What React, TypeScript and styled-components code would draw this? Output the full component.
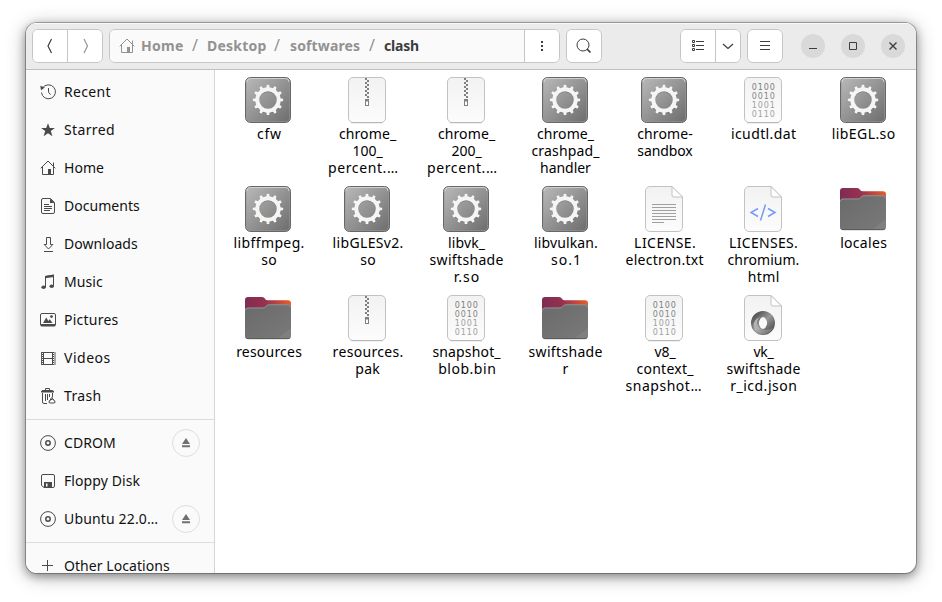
import React, { useLayoutEffect, useRef, useState } from "react";
import styled, { createGlobalStyle, css } from "styled-components";

const GlobalStyle = createGlobalStyle`
  * { box-sizing: border-box; }
  body { margin: 0; background: #fff; overflow: hidden; }
  svg { display: block; flex: none; }
`;

const fontStack = `"Noto Sans", "Open Sans", sans-serif`;

const Desktop = styled.div`
  width: 942px;
  height: 602px;
  padding: 23px 26px 29px;
  background: #fff;
  font: 14px/17px ${fontStack};
  color: #000;
`;

const Window = styled.main`
  width: 890px;
  height: 550px;
  display: flex;
  flex-direction: column;
  border-radius: 11px;
  overflow: hidden;
  background: #fff;
  box-shadow: 0 0 0 1px rgba(0, 0, 0, 0.28), 0 3px 9px 1px rgba(0, 0, 0, 0.3),
    0 3px 20px rgba(0, 0, 0, 0.3);
`;

const HeaderBar = styled.header`
  height: 47px;
  flex: none;
  display: flex;
  align-items: flex-start;
  padding: 5px 11px 0 6px;
  background: #ebebeb;
  border-bottom: 1px solid #bfbfbf;
  box-shadow: inset 0 1px #f9f9f9;
`;

const ButtonGroup = styled.div<{ $gap?: number }>`
  display: flex;
  margin-top: 1px;
  height: 34px;
  margin-right: ${(p) => p.$gap ?? 6}px;
  border: 1px solid #c6c6c6;
  border-radius: 6px;
  overflow: hidden;
  background: #fff;
`;

const HeaderButton = styled.button<{ $width: number; $divided?: boolean }>`
  width: ${(p) => p.$width}px;
  padding: 0;
  border: 0;
  ${(p) => p.$divided && css`border-left: 1px solid #c6c6c6;`}
  background: #fff;
  color: #3d3d3d;
  display: flex;
  align-items: center;
  justify-content: center;
`;

const PathBar = styled.nav`
  width: 414px;
  display: flex;
  align-items: center;
  padding-left: 9px;
  background: #fafafa;
  color: #929292;
  font-weight: 700;
`;

const CrumbIcon = styled.span`
  width: 22px;
`;

const Crumb = styled.span<{ $width: number; $current?: boolean }>`
  width: ${(p) => p.$width}px;
  padding-bottom: 2px;
  color: ${(p) => (p.$current ? "#3d3d3d" : "#929292")};
`;

const Slash = styled.span<{ $width: number }>`
  width: ${(p) => p.$width}px;
  padding-bottom: 1px;
  font-weight: 400;
  font-size: 16px;
`;

const Spacer = styled.div`
  flex: 1;
`;

const WindowControls = styled.div`
  display: flex;
  gap: 16px;
  margin-top: 6px;
`;

const ControlButton = styled.button`
  width: 24px;
  height: 24px;
  padding: 0;
  border: 0;
  border-radius: 50%;
  background: #d9d9d9;
  color: #3d3d3d;
  display: flex;
  align-items: center;
  justify-content: center;
`;

const Body = styled.div`
  flex: 1;
  min-height: 0;
  display: flex;
`;

const Sidebar = styled.aside`
  width: 189px;
  flex: none;
  padding-top: 3px;
  background: #fafafa;
  border-right: 1px solid #d5d5d5;
  overflow: hidden;
`;

const Place = styled.div`
  height: 38px;
  display: flex;
  align-items: center;
  gap: 8px;
  padding: 0 14px;
  color: #4a4a4a;
`;

const PlaceName = styled.span`
  flex: 1;
  padding-bottom: 2px;
  color: #111;
`;

const Divider = styled.div`
  height: 1px;
  margin: 4px 0;
  background: #dcdcdc;
`;

const EjectButton = styled.button`
  width: 28px;
  height: 28px;
  padding: 0;
  border: 1px solid #dedede;
  border-radius: 50%;
  background: transparent;
  color: #707070;
  display: flex;
  align-items: center;
  justify-content: center;
`;

const FileGrid = styled.section`
  flex: 1;
  display: grid;
  grid-template-columns: repeat(6, 98px) 100px;
  grid-auto-rows: 109px;
  column-gap: 1px;
  align-content: start;
  padding: 6px 0 0 4px;
`;

const FileCell = styled.figure`
  margin: 0;
  display: flex;
  flex-direction: column;
  align-items: center;
`;

const FileName = styled.figcaption`
  display: flex;
  flex-direction: column;
  align-items: center;
  padding: 1px 0 0 1px;
`;

const NameLine = styled.span<{ $shift?: number }>`
  height: 17px;
  margin-left: ${(p) => (p.$shift ?? 0) * 2}px;
`;

const Tracked = styled.span`
  white-space: pre;
`;

/* Tracks the text so that it fills the width set for it. */
function FitText({ text, width }: { text: string; width: number }) {
  const ref = useRef<HTMLSpanElement>(null);
  const [spacing, setSpacing] = useState(0);
  useLayoutEffect(() => {
    const ctx = document.createElement("canvas").getContext("2d");
    if (!ctx || !ref.current || text.length < 2) return;
    const s = getComputedStyle(ref.current);
    ctx.font = `${s.fontWeight} ${s.fontSize} ${s.fontFamily}`;
    const m = ctx.measureText(text);
    const natural = m.actualBoundingBoxRight + m.actualBoundingBoxLeft;
    setSpacing((width - natural) / (text.length - 1));
  }, [text, width]);
  return (
    <Tracked ref={ref} style={{ letterSpacing: `${spacing}px`, marginRight: `${-spacing}px` }}>
      {text}
    </Tracked>
  );
}

/* ---------- symbolic icons ---------- */

const Symbolic = styled.svg.attrs({ width: 16, height: 16, viewBox: "0 0 16 16" })`
  fill: none;
  stroke: currentColor;
  stroke-width: 1;
`;

const HomeIcon = () => (
  <Symbolic>
    <path d="M.7 8.3 8 1l7.3 7.3M2.500 7v7.500h11V7M13.500 2.500v4" />
    <path d="M8 9h3v5.500H8z" fill="currentColor" stroke="none" />
  </Symbolic>
);

const placeIcons: Record<string, React.ReactNode> = {
  recent: (
    <Symbolic>
      <path d="M2.6 4A7 7 0 1 1 1.500 8.500M8.500 4v4.200l2 2.500" />
      <path d="M.3 1.800 1 6.300 4.800 3.600z" fill="currentColor" stroke="none" />
    </Symbolic>
  ),
  starred: (
    <Symbolic>
      <path d="M8 1.2 9.8 6h5.1l-4.1 3.1 1.6 5.1L8 11.2l-4.4 3 1.6-5.1L1.1 6h5.1z" fill="currentColor" stroke="none" />
    </Symbolic>
  ),
  home: <HomeIcon />,
  documents: (
    <Symbolic>
      <path d="M3 .5h7.500l4 4V14a1.500 1.500 0 0 1-1.500 1.500H3A1.500 1.500 0 0 1 1.500 14V2A1.500 1.500 0 0 1 3 .5z" />
      <path d="M10 .5v4.500h4.500z" fill="currentColor" stroke="none" />
      <path d="M4 6.500h5M4 8.500h8M4 10.500h8M4 12.500h6" />
    </Symbolic>
  ),
  downloads: (
    <Symbolic>
      <path d="M6.500 1.500h4v7h2.300L8.500 13 4.200 8.500h2.300zM4 15.500h9" />
    </Symbolic>
  ),
  music: (
    <Symbolic>
      <path d="M5.500 13V2.500l8-1.300V12" />
      <path d="M5 1.900 14 .5v2.400L5 4.300z" fill="currentColor" stroke="none" />
      <ellipse cx="3.600" cy="13.200" rx="2.200" ry="1.800" fill="currentColor" stroke="none" />
      <ellipse cx="11.700" cy="12.200" rx="2.200" ry="1.800" fill="currentColor" stroke="none" />
    </Symbolic>
  ),
  pictures: (
    <Symbolic>
      <rect x=".5" y="1.500" width="15" height="12" rx="1.500" />
      <path d="M.5 12h15v1a1.300 1.300 0 0 1-1.300 1.500H1.800A1.300 1.300 0 0 1 .5 13z" fill="currentColor" stroke="none" />
      <path d="M3 11 6.300 5.600 8.300 9l1.500-1.800L12.500 11z" fill="currentColor" stroke="none" />
      <circle cx="11.500" cy="4.600" r="1.400" fill="currentColor" stroke="none" />
    </Symbolic>
  ),
  videos: (
    <Symbolic>
      <path d="M3.500 2v13M12.500 2v13M3.500 2.500h9M3.500 8.500h9M3.500 14.500h9" />
      <path d="M2.500 2v13M13.500 2v13" strokeDasharray="1 1" />
      <path d="M1.500 2v13M15 2v13" strokeWidth=".9" />
    </Symbolic>
  ),
  trash: (
    <Symbolic>
      <path d="M5.500 2V.5h4V2" />
      <path d="M1 4.500V3.300L2.500 2h9.800L14 3.300v1.200z" fill="currentColor" stroke="none" />
      <path d="M2.500 5v9q0 1.500 1.500 1.500h3M12.500 5v4.500M5.500 6v7M7.500 6v6M9.500 6v3" />
      <path d="M11.500 9.500 10 12.500M12 10l2 2.500M9.500 12.500q-1.500 2.500 .5 2.500h4q2 0 .5-2.500l-2-1.500z" />
    </Symbolic>
  ),
  disc: (
    <Symbolic>
      <circle cx="8" cy="8" r="7.400" />
      <circle cx="8" cy="8" r="2.200" strokeWidth="1.500" />
    </Symbolic>
  ),
  floppy: (
    <Symbolic>
      <path d="M3 1.500h10A1.500 1.500 0 0 1 14.500 3v10a1.500 1.500 0 0 1-1.500 1.500H4L1.500 12.500V3A1.500 1.500 0 0 1 3 1.500z" />
      <path d="M4 9h8v5.500H4z" fill="currentColor" stroke="none" />
      <path d="M6 10.500h1.500v3H6z" fill="#fafafa" stroke="none" />
    </Symbolic>
  ),
  plus: (
    <Symbolic>
      <path d="M7.500 2v11M2 7.500h11" />
    </Symbolic>
  ),
};

const EjectIcon = () => (
  <svg width="10" height="10" viewBox="0 0 10 10" fill="currentColor">
    <path d="M5 0 9 6H1zM1 7.300h8v2H1z" />
  </svg>
);

const ControlIcon = styled.svg.attrs({ width: 8, height: 8, viewBox: "0 0 8 8", fill: "none", stroke: "currentColor" })``;

/* ---------- file type icons ---------- */

const toothAngles = Array.from({ length: 12 }, (_, i) => i * 30);

const SharedDefs = () => (
  <svg width="0" height="0">
    <defs>
      <linearGradient id="metal" x1="0" y1="0" x2="1" y2="1">
        <stop offset="0" stopColor="#bababa" />
        <stop offset="1" stopColor="#6c6c6c" />
      </linearGradient>
      <linearGradient id="paper" x1="0" y1="0" x2="0" y2="1">
        <stop offset="0" stopColor="#f2f2f2" />
        <stop offset="1" stopColor="#fcfcfc" />
      </linearGradient>
      <linearGradient id="folderBack" x1="0" y1="0" x2="1" y2="0">
        <stop offset="0" stopColor="#7f2b55" />
        <stop offset=".45" stopColor="#96324e" />
        <stop offset="1" stopColor="#ec5b29" />
      </linearGradient>
      <linearGradient id="folderFront" x1="0" y1="0" x2="1" y2="1">
        <stop offset="0" stopColor="#6a6a6a" />
        <stop offset=".84" stopColor="#777" />
        <stop offset=".85" stopColor="#7f7f7f" />
        <stop offset="1" stopColor="#808080" />
      </linearGradient>
      <linearGradient id="ring" x1="0" y1="0" x2="1" y2="1">
        <stop offset="0" stopColor="#555" />
        <stop offset=".5" stopColor="#999" />
        <stop offset="1" stopColor="#555" />
      </linearGradient>
      <linearGradient id="ringLight" x1="0" y1="0" x2="1" y2="1">
        <stop offset="0" stopColor="#eee" />
        <stop offset="1" stopColor="#777" />
      </linearGradient>
    </defs>
  </svg>
);

const FileIcon = styled.svg.attrs({ width: 48, height: 48, viewBox: "0 0 48 48", fill: "none" })``;

const Gear = ({ color }: { color: string }) => (
  <g>
    <circle cx="24" cy="24" r="10.700" stroke={color} strokeWidth="4" />
    {toothAngles.map((a) => (
      <path key={a} d="M22.300 12.500 22.700 9q1.300-.6 2.600 0l.4 3.500z" fill={color} transform={`rotate(${a} 24 24)`} />
    ))}
  </g>
);

const Executable = () => (
  <FileIcon>
    <rect x="1.500" y="1.500" width="45" height="45" rx="5" fill="url(#metal)" stroke="#676767" />
    <path d="M3 6q0-3.500 3.500-3.500h35Q45 2.500 45 6" stroke="#d0d0d0" />
    <path d="M2.500 6v36q0 3.500 3.500 3.500h36q3.500 0 3.500-3.500V6" stroke="#999" strokeOpacity=".55" />
    <g transform="translate(0 .7)"><Gear color="rgba(60,60,60,.3)" /></g>
    <Gear color="#f6f5f4" />
  </FileIcon>
);

const Sheet = () => (
  <>
    <rect x="5.500" y="1.500" width="37" height="45" rx="4.500" fill="url(#paper)" stroke="#c2c2c2" />
    <path d="M8 46.800h32" stroke="#aaa" strokeWidth=".6" />
  </>
);

const FoldedSheet = () => (
  <>
    <path d="M10 1.500h22L42.500 12v30a4.500 4.500 0 0 1-4.500 4.500H10A4.500 4.500 0 0 1 5.500 42V6A4.500 4.500 0 0 1 10 1.500z" fill="url(#paper)" stroke="#c2c2c2" />
    <path d="M32 1.500V10q0 2 2 2h8.500z" fill="#fff" stroke="#c2c2c2" />
  </>
);

const Archive = () => (
  <FileIcon>
    <Sheet />
    <path d="M23 2v20" stroke="#808080" strokeWidth="2" strokeDasharray="2 2" />
    <path d="M25 4v19" stroke="#808080" strokeWidth="2" strokeDasharray="2 2" />
    <rect x="22.500" y="23.500" width="3" height="6" fill="#fff" stroke="#808080" />
    <path d="M22 23h4v2.500h-4z" fill="#808080" />
  </FileIcon>
);

const Bits = styled.text`
  font: 8px "DejaVu Sans", sans-serif;
  letter-spacing: 0.95px;
`;

const bitRows: [string, string][] = [
  ["0100", "#7d7d7d"],
  ["0010", "#858585"],
  ["1001", "#a2a2a2"],
  ["0110", "#a2a2a2"],
];

const Binary = () => (
  <FileIcon>
    <Sheet />
    {bitRows.map(([bits, color], i) => (
      <Bits key={i} x="12.700" y={14 + i * 9} fill={color}>{bits}</Bits>
    ))}
  </FileIcon>
);

const TextFile = () => (
  <FileIcon>
    <FoldedSheet />
    <path d="M12 19.500h24M12 22.500h24M12 25.500h24M12 28.500h24M12 31.500h24M12 34.500h24M12 37.500h12" stroke="#a0a0a0" />
  </FileIcon>
);

const HtmlFile = () => (
  <FileIcon>
    <FoldedSheet />
    <path d="m19 23.500-7 4 7 4M29 23.500l7 4-7 4M26.500 19.500l-5 16" stroke="#739cf5" strokeWidth="1.500" />
  </FileIcon>
);

const JsonFile = () => (
  <FileIcon>
    <FoldedSheet />
    <circle cx="24" cy="29" r="8" stroke="url(#ring)" strokeWidth="8" />
    <path d="M23 22.500c-6 1-7 11 0 13 4 1 9 0 11-2-2 6-10 9-16 5-6-5-4-14 5-16z" fill="url(#ringLight)" opacity=".65" />
    <ellipse cx="24" cy="29" rx="3.700" ry="6" fill="#fafafa" />
  </FileIcon>
);

const Folder = () => (
  <FileIcon>
    <path d="M1 16V6q0-3 3-3h14q2.200 0 3.200 2 .7 1.200 2.500 1.200H44q3 0 3 3V16z" fill="url(#folderBack)" />
    <path d="M1 16.500q0-3 3-3h15q1.500 0 2.500-1.200l1-1.100q.8-.9 2.300-.9H44q3 0 3 3V42q0 3-3 3H4q-3 0-3-3z" fill="url(#folderFront)" />
    <path d="M1.500 16.500q0-2.500 2.500-2.500h15q1.600 0 2.600-1.200l1-1.100q.8-.9 2.300-.9H44q2.500 0 2.500 2.500" stroke="#9a9a9a" strokeWidth=".8" />
    <path d="M2 43.500q.7 1.200 2.200 1.200h39.600q1.500 0 2.200-1.200" stroke="#555" strokeWidth=".9" />
  </FileIcon>
);

const kinds = { exec: Executable, zip: Archive, bin: Binary, txt: TextFile, html: HtmlFile, json: JsonFile, folder: Folder };

type Line = [text: string, width: number, shift?: number];

const files: { kind: keyof typeof kinds; lines: Line[] }[] = [
  { kind: "exec", lines: [["cfw", 24, 0.5]] },
  { kind: "zip", lines: [["chrome_", 58], ["100_", 30], ["percent.…", 69, -4.5]] },
  { kind: "zip", lines: [["chrome_", 58], ["200_", 31], ["percent.…", 69, -4.5]] },
  { kind: "exec", lines: [["chrome_", 58], ["crashpad_", 69], ["handler", 50]] },
  { kind: "exec", lines: [["chrome-", 55, 0.5], ["sandbox", 56, 0.5]] },
  { kind: "bin", lines: [["icudtl.dat", 64]] },
  { kind: "exec", lines: [["libEGL.so", 62]] },
  { kind: "exec", lines: [["libffmpeg.", 69, 0.5], ["so", 15, 0.5]] },
  { kind: "exec", lines: [["libGLESv2.", 69, 0.5], ["so", 15, 0.5]] },
  { kind: "exec", lines: [["libvk_", 37], ["swiftshade", 74], ["r.so", 24]] },
  { kind: "exec", lines: [["libvulkan.", 62, 0.5], ["so.1", 27, 0.5]] },
  { kind: "txt", lines: [["LICENSE.", 60, 0.5], ["electron.txt", 78]] },
  { kind: "html", lines: [["LICENSES.", 67], ["chromium.", 71], ["html", 30]] },
  { kind: "folder", lines: [["locales", 46]] },
  { kind: "folder", lines: [["resources", 65, 0.5]] },
  { kind: "zip", lines: [["resources.", 69, 0.5], ["pak", 24]] },
  { kind: "bin", lines: [["snapshot_", 69], ["blob.bin", 56, 0.5]] },
  { kind: "folder", lines: [["swiftshade", 74], ["r", 6]] },
  { kind: "bin", lines: [["v8_", 22, 0.5], ["context_", 58, 0.5], ["snapshot…", 76, -1]] },
  { kind: "json", lines: [["vk_", 21], ["swiftshade", 74], ["r_icd.json", 65]] },
];

type PlaceItem = { icon: string; name: string; width: number; eject?: boolean };

const placeGroups: PlaceItem[][] = [
  [
    { icon: "recent", name: "Recent", width: 45.5 },
    { icon: "starred", name: "Starred", width: 50 },
    { icon: "home", name: "Home", width: 39 },
    { icon: "documents", name: "Documents", width: 75 },
    { icon: "downloads", name: "Downloads", width: 73 },
    { icon: "music", name: "Music", width: 38 },
    { icon: "pictures", name: "Pictures", width: 53.5 },
    { icon: "videos", name: "Videos", width: 46.5 },
    { icon: "trash", name: "Trash", width: 36.5 },
  ],
  [
    { icon: "disc", name: "CDROM", width: 51, eject: true },
    { icon: "floppy", name: "Floppy Disk", width: 75.5 },
    { icon: "disc", name: "Ubuntu 22.0…", width: 93, eject: true },
  ],
  [{ icon: "plus", name: "Other Locations", width: 106 }],
];

export default function App() {
  return (
    <Desktop>
      <GlobalStyle />
      <Window>
        <HeaderBar>
          <ButtonGroup>
            <HeaderButton $width={34} aria-label="Back">
              <Symbolic><path d="M9.500 1 6 8l3.500 7" strokeWidth="1.200" /></Symbolic>
            </HeaderButton>
            <HeaderButton $width={35} $divided aria-label="Forward">
              <Symbolic opacity=".55"><path d="m7 1 3.500 7L7 15" strokeWidth="1.200" /></Symbolic>
            </HeaderButton>
          </ButtonGroup>
          <ButtonGroup>
            <PathBar>
              <CrumbIcon><HomeIcon /></CrumbIcon>
              <Crumb $width={51}><FitText text="Home" width={41} /></Crumb>
              <Slash $width={15}>/</Slash>
              <Crumb $width={67}><FitText text="Desktop" width={58.5} /></Crumb>
              <Slash $width={16}>/</Slash>
              <Crumb $width={79}><FitText text="softwares" width={70} /></Crumb>
              <Slash $width={15}>/</Slash>
              <Crumb $width={40} $current><FitText text="clash" width={35} /></Crumb>
            </PathBar>
            <HeaderButton $width={35} $divided aria-label="Path menu">
              <Symbolic><path d="M7 3h2v2H7zM7 7h2v2H7zM7 11h2v2H7z" fill="currentColor" stroke="none" /></Symbolic>
            </HeaderButton>
          </ButtonGroup>
          <ButtonGroup>
            <HeaderButton $width={34} aria-label="Search">
              <Symbolic><circle cx="7" cy="7" r="6" /><path d="m11 11 3.500 3.500" strokeWidth="1.700" /></Symbolic>
            </HeaderButton>
          </ButtonGroup>
          <Spacer />
          <ButtonGroup>
            <HeaderButton $width={34} aria-label="List view">
              <Symbolic>
                <path d="M6 3.500h8M6 7.500h8M6 11.500h8" />
                <path d="M2.500 2.500h2v2h-2zM2.500 6.500h2v2h-2zM2.500 10.500h2v2h-2z" />
              </Symbolic>
            </HeaderButton>
            <HeaderButton $width={25} $divided aria-label="View options">
              <Symbolic><path d="m3 6 5 4.500L13 6" strokeWidth="1.200" /></Symbolic>
            </HeaderButton>
          </ButtonGroup>
          <ButtonGroup $gap={18}>
            <HeaderButton $width={34} aria-label="Menu">
              <Symbolic><path d="M3 3.500h10M3 7.500h10M3 11.500h10" /></Symbolic>
            </HeaderButton>
          </ButtonGroup>
          <WindowControls>
            <ControlButton aria-label="Minimize">
              <ControlIcon><path d="M0 6.500h8" /></ControlIcon>
            </ControlButton>
            <ControlButton aria-label="Maximize">
              <ControlIcon><path d="M.5 .5h7v7h-7z" /></ControlIcon>
            </ControlButton>
            <ControlButton aria-label="Close">
              <ControlIcon><path d="m.5 .5 7 7M7.500 .5l-7 7" strokeWidth="1.400" /></ControlIcon>
            </ControlButton>
          </WindowControls>
        </HeaderBar>
        <Body>
          <Sidebar>
            {placeGroups.map((group, g) => (
              <React.Fragment key={g}>
                {g > 0 && <Divider />}
                {group.map((p) => (
                  <Place key={p.name}>
                    {placeIcons[p.icon]}
                    <PlaceName><FitText text={p.name} width={p.width} /></PlaceName>
                    {p.eject && <EjectButton aria-label="Eject"><EjectIcon /></EjectButton>}
                  </Place>
                ))}
              </React.Fragment>
            ))}
          </Sidebar>
          <FileGrid>
            {files.map((f, i) => {
              const Icon = kinds[f.kind];
              return (
                <FileCell key={i}>
                  <Icon />
                  <FileName>
                    {f.lines.map(([text, width, shift], n) => (
                      <NameLine key={n} $shift={shift}><FitText text={text} width={width} /></NameLine>
                    ))}
                  </FileName>
                </FileCell>
              );
            })}
          </FileGrid>
        </Body>
      </Window>
      <SharedDefs />
    </Desktop>
  );
}
